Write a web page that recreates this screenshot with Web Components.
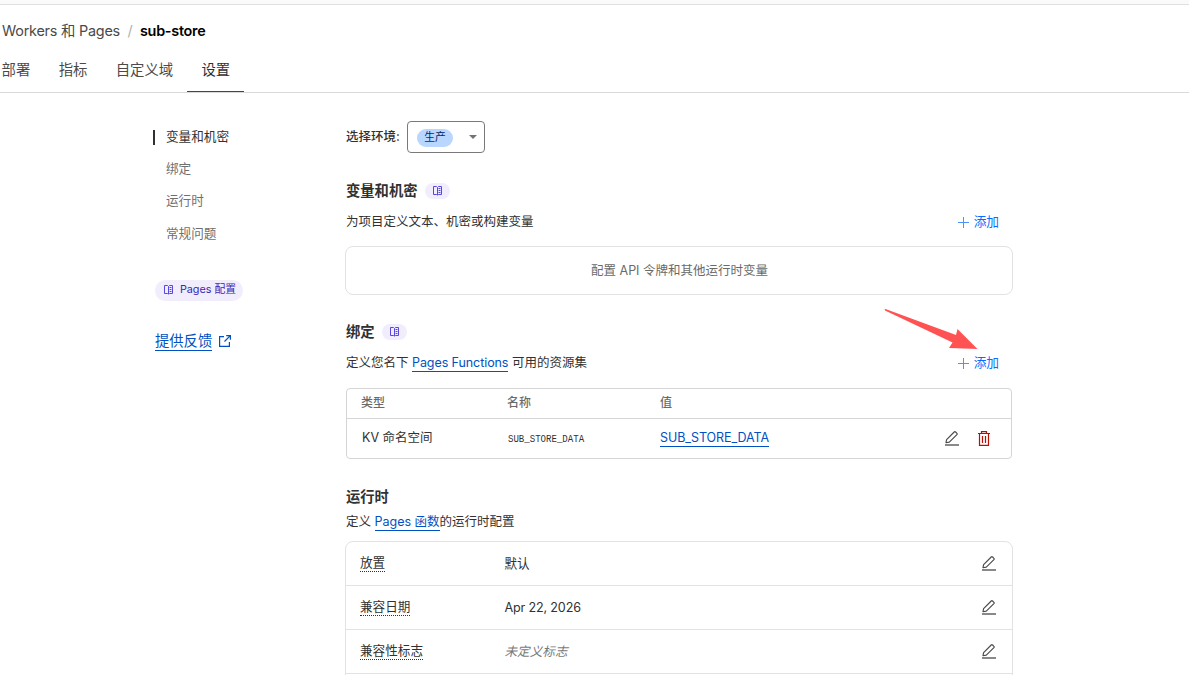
<!DOCTYPE html>
<html lang="zh-CN">
<head>
<meta charset="utf-8">
<title>sub-store</title>
<style>
html{background:#fff}
body{margin:0;height:675px;overflow:hidden;font-family:Inter,"Noto Sans CJK SC",sans-serif;font-size:12.6px;line-height:20px;color:#313131}
</style>
</head>
<body>
<settings-page></settings-page>
<script>
const define = (name, html) => {
  const t = document.createElement('template');
  t.innerHTML = html;
  customElements.define(name, class extends HTMLElement {
    constructor() {
      super();
      this.attachShadow({mode: 'open'}).appendChild(t.content.cloneNode(true));
    }
  });
};

define('icon-book', `<style>:host{display:block;width:9px;height:10px}svg{display:block}</style>
<svg width="9" height="10" viewBox="0 0 9 10" fill="none" stroke="#5746e0" stroke-width="1"><path d="M4.500 1.500V9M4.500 1.500L3.500 .5H.5V8.500H3.500L4.500 9M4.500 9L5.500 8.500H8.500V.5H5.500L4.500 1.500M5.500 2.500H7.500M5.500 4.500H7.500M5.500 6.500H7.500"/></svg>`);

define('icon-edit', `<style>:host{display:block;width:14px;height:15px}svg{display:block}</style>
<svg width="14" height="15" viewBox="0 0 14 15" fill="none" stroke="#4a4a4a" stroke-width="1.150"><path d="M1 11.700L1.600 8.600L9.200 1Q9.900.4 10.600 1L11.900 2.300Q12.500 3 11.900 3.700L4.300 11.100Z" stroke-linejoin="round"/><path d="M0 14H14" stroke-width="1.300"/></svg>`);

define('icon-trash', `<style>:host{display:block;width:12px;height:15px}svg{display:block}</style>
<svg width="12" height="15" viewBox="0 0 12 15" fill="none" stroke="#b80f03" stroke-width="1.200"><path d="M0 2.500H12M3.500 2.500V.6H8.500V2.500M1.500 2.600V14.400H10.500V2.600M4.500 5V12M7.500 5V12"/></svg>`);

define('icon-external', `<style>:host{display:block;width:12px;height:12px}svg{display:block}</style>
<svg width="12" height="12" viewBox="0 0 12 12" fill="none" stroke="#0051c3" stroke-width="1.200"><path d="M5 1.600H.6V11.400H10.400V7M7.200.6H11.400V4.800M11.300.7L5.500 6.500"/></svg>`);

define('bread-crumb', `<style>:host{display:flex;height:20px;margin-top:16px;padding-left:2px;font-size:14.400px;letter-spacing:-.22px;color:#4a4a4a;white-space:pre}
i{font-style:normal;color:#b0b0b0;margin:0 7.500px 0 7.500px}::slotted(b){font-weight:600;color:#000;letter-spacing:-.26px}</style>
<slot></slot><i>/</i><slot name="current"></slot>`);

define('tab-bar', `<style>:host{display:flex;height:43px;margin-top:9px;border-bottom:1px solid #d9d9d9;box-sizing:border-box}
::slotted(:first-child){margin-left:-12.600px}</style><slot></slot>`);
define('tab-item', `<style>:host{display:block;height:42px;box-sizing:border-box;padding:10px 14.200px 0;font-size:14.350px;line-height:20px;color:#4a4a4a}
:host([active]){color:#313131;border-bottom:1px solid #0051c3}</style><slot></slot>`);

define('nav-item', `<style>:host{display:flex;height:20px;margin-bottom:12.200px;color:#6f6f6f}
i{width:2px;height:15px;margin:3px 11px 0 -2px}:host([active]){color:#313131}:host([active]) i{background:#313131}</style><i></i><span><slot></slot></span>`);

define('text-link', `<style>:host{display:inline-block;height:19px;line-height:20px;color:#0051c3;border-bottom:1px solid #0051c3;box-sizing:border-box;white-space:nowrap}</style><slot></slot>`);

define('doc-pill', `<style>:host{display:flex;align-items:center;justify-content:center;width:25px;height:16px;border-radius:11px;background:#f1edfd;color:#3a28b4;font-size:10.800px;box-sizing:border-box}
:host([wide]){width:88px;height:21px;gap:7px;padding-left:2px}:host([wide]) span{margin-top:-1px}span{white-space:nowrap}:host(:not([wide])) span{display:none}</style><icon-book></icon-book><span><slot></slot></span>`);

define('env-select', `<style>:host{display:flex;height:32px;align-items:center}label{width:61px;font-weight:500;font-size:12.500px}
div{display:flex;align-items:center;justify-content:space-between;box-sizing:border-box;width:78px;height:32px;border:1px solid #797979;border-radius:4px;padding:0 7px 0 9px}
span{background:#b9d6ff;color:#002b67;border-radius:9px;width:36px;height:18px;line-height:17px;font-size:10.800px;text-align:center;margin-top:1px}</style>
<label><slot></slot></label><div><span><slot name="value"></slot></span><svg width="8" height="4"><path d="M0 0H8L4 4Z" fill="#737373"/></svg></div>`);

define('section-head', `<style>:host{display:flex;align-items:center;height:20px;gap:7.500px}h2{margin:0;font-size:14.300px;font-weight:600;line-height:20px}</style><h2><slot></slot></h2><slot name="doc"></slot>`);

define('section-desc', `<style>:host{display:flex;height:20px;margin-top:10px;justify-content:space-between;padding-right:13px;font-size:12.500px}p{margin:0;white-space:nowrap;padding-top:1px}</style><p><slot></slot></p><slot name="action"></slot>`);

define('add-button', `<style>:host{display:flex;gap:5px;color:#056dff;align-items:center;font-size:12.700px}svg{margin-top:2px}span{padding-top:1px}</style>
<svg width="11" height="11" stroke="#4a94ff" stroke-width="1"><path d="M0 5.500H11M5.500 0V11"/></svg><span><slot></slot></span>`);

define('empty-box', `<style>:host{display:flex;align-items:center;justify-content:center;height:49px;margin:15px -1px 0;box-sizing:border-box;border:1px solid #e2e2e2;border-radius:8px;color:#6a6a6a;font-size:12.500px;padding-left:1px}</style><slot></slot>`);

define('binding-table', `<style>:host{display:block;box-sizing:border-box;height:71px;margin-top:16px;border:1px solid #d5d5d5;border-radius:4px;font-size:12.500px}
div{display:grid;grid-template-columns:146px 153px 1fr auto;padding:0 21px 0 14px;align-items:center}
.h{height:29px;border-bottom:1px solid #d5d5d5;color:#6a6a6a;font-size:12px;font-weight:500}.r{height:39px}
.a{display:flex;gap:19px;margin-top:-1px}code{display:inline-block;font:10.600px/20px "Liberation Mono",monospace;transform:scaleX(.855);transform-origin:0 50%;margin-left:1px;vertical-align:top;padding-top:1px}.h span,.r>:first-child{position:relative;top:-1px}.r>:first-child{padding-left:1px}text-link{justify-self:start;letter-spacing:-.06px;margin-top:-2px}</style>
<div class="h"><span>类型</span><span>名称</span><span>值</span></div>
<div class="r"><span>KV 命名空间</span><span><code>SUB_STORE_DATA</code></span><text-link>SUB_STORE_DATA</text-link><span class="a"><icon-edit></icon-edit><icon-trash></icon-trash></span></div>`);

define('config-row', `<style>:host{display:grid;grid-template-columns:144.500px 1fr 14px;align-items:center;height:43px;padding:0 16px 0 14px;border-bottom:1px solid #e2e2e2}
b{font-weight:400;justify-self:start;height:17px;line-height:18px;border-bottom:1px dotted #313131;white-space:nowrap;margin-top:-2px}
span{letter-spacing:-.17px}:host([unset]) span{letter-spacing:0;font-style:italic;color:#797979}icon-edit{margin-top:0}</style><b><slot></slot></b><span><slot name="value"></slot></span><icon-edit></icon-edit>`);
define('config-card', `<style>:host{display:block;margin:10px -1px 0;border:1px solid #e2e2e2;border-radius:8px;height:150px}</style><slot></slot>`);

define('settings-page', `<style>
:host{display:block;height:675px;overflow:hidden}
.top{height:4px;background:#fafafa;border-bottom:1px solid #e0e0e0}
.cols{display:flex}
nav{width:191px;margin:34px 0 0 155px;height:540px}
main{width:666px;padding-top:28px}
.fb{display:flex;align-items:center;gap:7px;margin-top:30px;font-size:14.300px}
.s{margin-top:28px}.t{margin-top:27px}
</style>
<div class="top"></div>
<bread-crumb>Workers 和 Pages<b slot="current">sub-store</b></bread-crumb>
<tab-bar><tab-item>部署</tab-item><tab-item>指标</tab-item><tab-item>自定义域</tab-item><tab-item active>设置</tab-item></tab-bar>
<div class="cols">
<nav><nav-item active>变量和机密</nav-item><nav-item>绑定</nav-item><nav-item>运行时</nav-item><nav-item>常规问题</nav-item>
<doc-pill wide style="margin-top:36.400px">Pages 配置</doc-pill>
<div class="fb"><text-link style="height:20px">提供反馈</text-link><icon-external></icon-external></div></nav>
<main>
<env-select>选择环境:<span slot="value">生产</span></env-select>
<section-head class="s">变量和机密<doc-pill slot="doc"></doc-pill></section-head>
<section-desc>为项目定义文本、机密或构建变量<add-button slot="action">添加</add-button></section-desc>
<empty-box>配置 API 令牌和其他运行时变量</empty-box>
<section-head class="t">绑定<doc-pill slot="doc"></doc-pill></section-head>
<section-desc>定义您名下 <text-link style="letter-spacing:-.08px">Pages Functions</text-link> 可用的资源集<add-button slot="action">添加</add-button></section-desc>
<binding-table></binding-table>
<section-head class="s">运行时</section-head>
<section-desc style="margin-top:4px">定义 <text-link>Pages 函数</text-link>的运行时配置</section-desc>
<config-card>
<config-row>放置<span slot="value">默认</span></config-row>
<config-row>兼容日期<span slot="value">Apr 22, 2026</span></config-row>
<config-row unset>兼容性标志<span slot="value">未定义标志</span></config-row>
</config-card>
</main>
</div>
<arrow-mark></arrow-mark>`);

// Annotation arrow laid over the page, pointing at the second add button
define('arrow-mark', `<style>:host{position:absolute;left:884px;top:308px;width:96px;height:44px;pointer-events:none}svg{display:block}</style>
<svg width="96" height="44"><path d="M.5 1.500L1.500 1L72 27L73.500 21L93.500 41L65 40L68.500 34.500L1 2.500Z" fill="#ff5353"/></svg>`);
</script>
</body>
</html>
